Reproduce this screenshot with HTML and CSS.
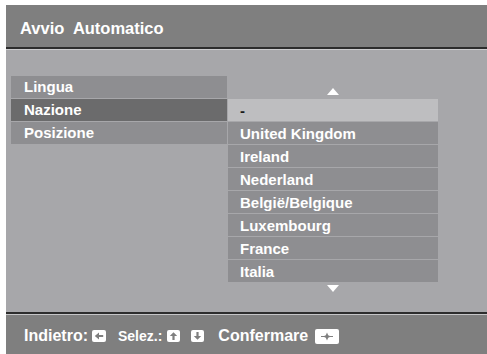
FILE: index.html
```html
<!DOCTYPE html>
<html lang="it">
<head>
<meta charset="utf-8">
<title>Avvio Automatico</title>
<link rel="stylesheet" href="styles.css">
</head>
<body>
<div class="screen">
  <header class="header"><span class="title">Avvio  Automatico</span></header>
  <main class="main">
    <ul class="menu">
      <li class="menu-item">Lingua</li>
      <li class="menu-item selected">Nazione</li>
      <li class="menu-item">Posizione</li>
    </ul>
    <div class="list">
      <div class="arrow-up"><span class="tri-up"></span></div>
      <ul class="options">
        <li class="option current">-</li>
        <li class="option">United Kingdom</li>
        <li class="option">Ireland</li>
        <li class="option">Nederland</li>
        <li class="option">België/Belgique</li>
        <li class="option">Luxembourg</li>
        <li class="option">France</li>
        <li class="option">Italia</li>
      </ul>
      <div class="arrow-down"><span class="tri-down"></span></div>
    </div>
  </main>
  <footer class="footer">
    <span class="lbl big">Indietro:</span>
    <svg class="key key-left" width="14" height="12" viewBox="0 0 14 12"><rect width="14" height="12" rx="2" fill="#fff"/><path d="M2.8 6 L7 2.4 V4.9 H11.2 V7.1 H7 V9.6 Z" fill="#7f7f7f"/></svg>
    <span class="lbl small sel">Selez.:</span>
    <svg class="key key-up" width="13" height="12" viewBox="0 0 13 12"><rect width="13" height="12" rx="2" fill="#fff"/><path d="M6.5 2.2 L10.2 6 H7.6 V10 H5.4 V6 H2.8 Z" fill="#7f7f7f"/></svg>
    <svg class="key key-down" width="13" height="12" viewBox="0 0 13 12"><rect width="13" height="12" rx="2" fill="#fff"/><path d="M6.5 9.8 L10.2 6 H7.6 V2 H5.4 V6 H2.8 Z" fill="#7f7f7f"/></svg>
    <span class="lbl big conf">Confermare</span>
    <svg class="key key-enter" width="24" height="15" viewBox="0 0 24 15"><rect width="24" height="15" rx="2" fill="#fff"/><rect x="6" y="7" width="12" height="1" fill="#7f7f7f"/><path d="M12 3.5 L13.2 6.3 L16 7.5 L13.2 8.7 L12 11.5 L10.8 8.7 L8 7.5 L10.8 6.3 Z" fill="#7f7f7f"/></svg>
  </footer>
</div>
</body>
</html>
```

FILE: styles.css
```css
html, body {
  margin: 0;
  padding: 0;
  background: #ffffff;
}

body {
  font-family: "Liberation Sans", Arial, sans-serif;
  font-weight: bold;
  color: #ffffff;
}

ul {
  list-style: none;
  margin: 0;
  padding: 0;
}

.screen {
  margin: 5px 0 0 6px;
  width: 481px;
  height: 349px;
  display: flex;
  flex-direction: column;
  overflow: hidden;
}

.header {
  box-sizing: border-box;
  height: 44px;
  flex: none;
  background: #7f7f7f;
  border-bottom: 2px solid #2c2c2c;
  padding: 14px 0 0 14px;
}

.title {
  font-size: 16.5px;
  line-height: 19px;
  white-space: pre;
}

.main {
  box-sizing: border-box;
  height: 263px;
  flex: none;
  background: #a7a7aa;
  border-top: 1px solid #cbcbcd;
  padding: 26px 0 0 5px;
  display: flex;
  gap: 1px;
}

.menu {
  width: 216px;
}

.menu-item {
  height: 22px;
  margin-bottom: 1px;
  line-height: 22px;
  padding-left: 13px;
  font-size: 15px;
  background: #8e8e91;
}

.menu-item.selected {
  background: #6b6b6c;
}

.list {
  width: 210px;
  display: flex;
  flex-direction: column;
}

.arrow-up {
  height: 22px;
  display: flex;
  justify-content: center;
  align-items: flex-end;
  padding-bottom: 3px;
  box-sizing: border-box;
}

.tri-up {
  width: 0;
  height: 0;
  border-left: 6px solid transparent;
  border-right: 6px solid transparent;
  border-bottom: 7px solid #ffffff;
}

.option {
  height: 22px;
  margin-top: 1px;
  line-height: 23px;
  padding-left: 12px;
  font-size: 15px;
  background: #8e8e91;
}

.option.current {
  background: #bebec0;
  color: #1a1a1a;
}

.arrow-down {
  display: flex;
  justify-content: center;
  padding-top: 3px;
}

.tri-down {
  width: 0;
  height: 0;
  border-left: 6px solid transparent;
  border-right: 6px solid transparent;
  border-top: 7px solid #ffffff;
}

.footer {
  flex: 1;
  background: #7f7f7f;
  border-top: 2px solid #2c2c2c;
  box-shadow: inset 0 1px 0 #c6c6c8;
  display: flex;
  align-items: center;
  padding: 4px 0 0 18px;
}

.lbl {
  line-height: 18px;
}

.big {
  font-size: 16px;
}

.small {
  font-size: 14px;
}

.key {
  display: block;
  flex: none;
}

.key-left {
  margin-left: 4px;
}

.sel {
  margin-left: 12px;
}

.key-up {
  margin-left: 5px;
}

.key-down {
  margin-left: 11px;
}

.conf {
  margin-left: 14px;
}

.key-enter {
  margin-left: 7px;
}
```
